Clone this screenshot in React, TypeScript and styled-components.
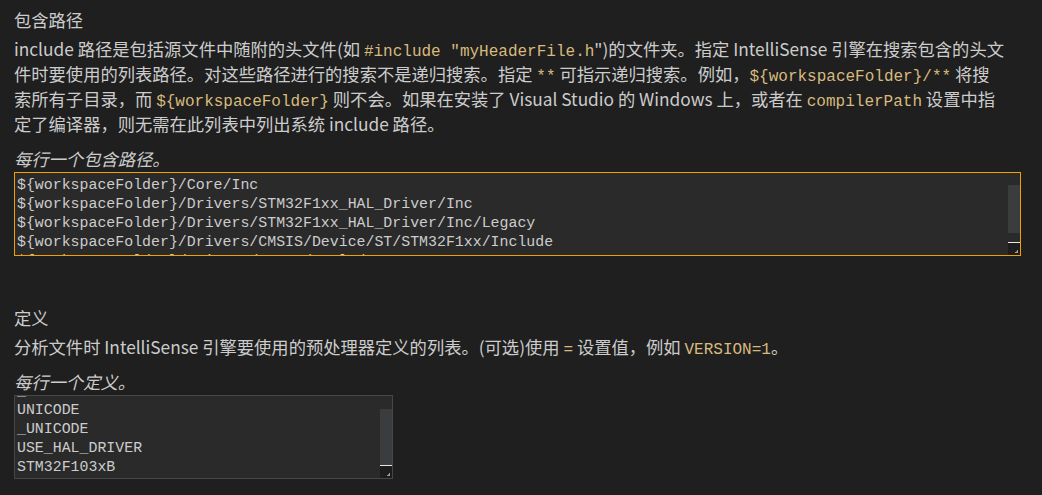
import React from "react";
import styled, { createGlobalStyle } from "styled-components";

const GlobalStyle = createGlobalStyle`
  html, body { margin: 0; padding: 0; background: #1f1f1f; }
`;

const Page = styled.div`
  display: flex;
  flex-direction: column;
  gap: 49px;
  padding: 7px 14px 0;
  font-family: "Noto Sans CJK SC", "Noto Sans", sans-serif;
  font-size: 17.3px;
  color: #cccccc;
`;

const Section = styled.section`
  display: flex;
  flex-direction: column;
`;

const Title = styled.div`
  line-height: 25px;
  margin-bottom: 4px;
  color: #cccccc;
`;

const Description = styled.div`
  line-height: 25px;
  white-space: nowrap;
`;

const Code = styled.span`
  font-family: "Liberation Mono", monospace;
  font-size: 16px;
  line-height: 0;
  color: #d7ba7d;
`;

const Hint = styled.div`
  font-style: italic;
  line-height: 25px;
  margin-top: 10px;
  margin-bottom: 1px;
`;

const TextBox = styled.div<{ $focused?: boolean; $width: number }>`
  position: relative;
  box-sizing: border-box;
  width: ${(p) => p.$width}px;
  height: 84px;
  border: 1px solid ${(p) => (p.$focused ? "#f0a000" : "#464646")};
  background: #2a2a2a;
  overflow: hidden;
`;

const Lines = styled.div<{ $offset: number }>`
  padding: 3px 2px 0;
  margin-top: ${(p) => -p.$offset}px;
  font-family: "Liberation Mono", monospace;
  font-size: 14.9px;
  line-height: 19px;
  color: #cccccc;
  white-space: pre;
`;

const ScrollTrack = styled.div`
  position: absolute;
  top: 0;
  right: 0;
  bottom: 0;
  width: 12px;
  background: #2a2a2a;
`;

const Thumb = styled.div<{ $top: number; $height: number }>`
  position: absolute;
  left: 0;
  right: 0;
  top: ${(p) => p.$top}px;
  height: ${(p) => p.$height}px;
  background: #3b3c3d;
`;

const TrackEnd = styled.div`
  position: absolute;
  left: 0;
  right: 0;
  top: 69px;
  height: 1px;
  background: #e6e6e6;
`;

const Resizer = styled.div`
  position: absolute;
  right: 0;
  bottom: 0;
  width: 12px;
  height: 12px;
  background: #1d1d1d;
  display: flex;
  align-items: flex-end;
  justify-content: flex-end;
`;

const Grip = () => (
  <svg width="12" height="12" viewBox="0 0 12 12">
    <path d="M9 7 L10 7 L10 10 L7 10 L7 9 L9 9 Z" fill="#a0a0a0" />
    <path d="M8 8 L9 8 L9 9 L8 9 Z" fill="#6a6a6a" />
  </svg>
);

type BoxProps = {
  lines: string[];
  width: number;
  focused?: boolean;
  offset: number;
  thumbTop: number;
  thumbHeight: number;
};

const ListBox = ({ lines, width, focused, offset, thumbTop, thumbHeight }: BoxProps) => (
  <TextBox $focused={focused} $width={width}>
    <Lines $offset={offset}>
      {lines.map((l, i) => (
        <div key={i}>{l}</div>
      ))}
    </Lines>
    <ScrollTrack>
      <Thumb $top={thumbTop} $height={thumbHeight} />
      <TrackEnd />
      <Resizer>
        <Grip />
      </Resizer>
    </ScrollTrack>
  </TextBox>
);

const includePaths = [
  "${workspaceFolder}/Core/Inc",
  "${workspaceFolder}/Drivers/STM32F1xx_HAL_Driver/Inc",
  "${workspaceFolder}/Drivers/STM32F1xx_HAL_Driver/Inc/Legacy",
  "${workspaceFolder}/Drivers/CMSIS/Device/ST/STM32F1xx/Include",
  "${workspaceFolder}/Drivers/CMSIS/Include",
];

const defines = ["_DEBUG", "UNICODE", "_UNICODE", "USE_HAL_DRIVER", "STM32F103xB"];

export default function App() {
  return (
    <>
      <GlobalStyle />
      <Page>
        <Section>
          <Title>包含路径</Title>
          <Description>
            include 路径是包括源文件中随附的头文件(如 <Code>#include "myHeaderFile.h</Code>")的文件夹。指定 IntelliSense 引擎在搜索包含的头文
            <br />
            件时要使用的列表路径。对这些路径进行的搜索不是递归搜索。指定 <Code>**</Code> 可指示递归搜索。例如，<Code>{"${workspaceFolder}/**"}</Code> 将搜
            <br />
            索所有子目录，而 <Code>{"${workspaceFolder}"}</Code> 则不会。如果在安装了 Visual Studio 的 Windows 上，或者在 <Code>compilerPath</Code> 设置中指
            <br />
            定了编译器，则无需在此列表中列出系统 include 路径。
          </Description>
          <Hint>每行一个包含路径。</Hint>
          <ListBox
            lines={includePaths}
            width={1007}
            focused
            offset={0}
            thumbTop={12}
            thumbHeight={48}
          />
        </Section>
        <Section>
          <Title>定义</Title>
          <Description>
            分析文件时 IntelliSense 引擎要使用的预处理器定义的列表。(可选)使用 <Code>=</Code> 设置值，例如 <Code>VERSION=1</Code>。
          </Description>
          <Hint>每行一个定义。</Hint>
          <ListBox
            lines={defines}
            width={379}
            offset={17}
            thumbTop={13}
            thumbHeight={56}
          />
        </Section>
      </Page>
    </>
  );
}
